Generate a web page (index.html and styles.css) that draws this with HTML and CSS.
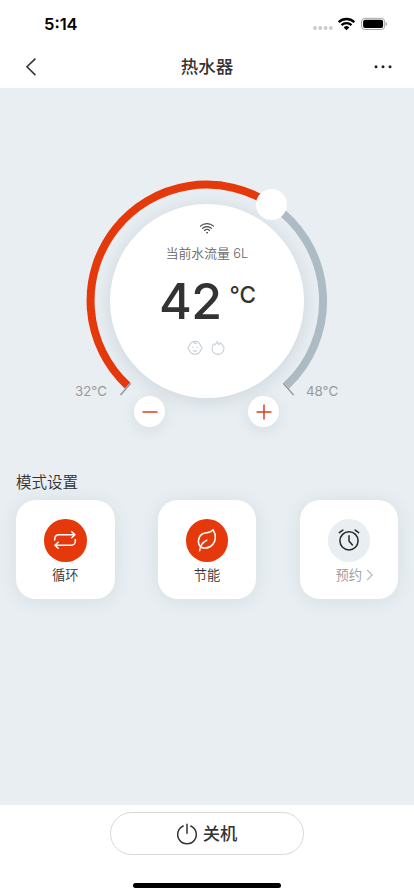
FILE: index.html
```html
<!DOCTYPE html>
<html lang="zh-CN">
<head>
<meta charset="utf-8">
<meta name="viewport" content="width=device-width, initial-scale=1">
<title>热水器</title>
<link rel="stylesheet" href="styles.css">
</head>
<body>
<div class="app">
  <header class="header">
    <div class="status">
      <span class="time">5:14</span>
      <svg class="status-icons" width="80" height="20" viewBox="0 0 80 20">
        <g fill="#cbcbcb"><circle cx="8" cy="14" r="1.9"/><circle cx="13.3" cy="14" r="1.9"/><circle cx="18.6" cy="14" r="1.9"/><circle cx="23.8" cy="14" r="1.9"/></g>
        <g fill="none" stroke="#000" stroke-width="2.3"><path d="M31.7 8.1a11.3 11.3 0 0 1 15.6 0"/><path d="M34.5 11.1a7.2 7.2 0 0 1 10 0"/></g>
        <path d="M36.7 13.4a4 4 0 0 1 5.6 0L39.500 16.2z"/>
        <rect x="54.500" y="4.3" width="23.2" height="11.2" rx="3.4" fill="none" stroke="#a5a5a5"/>
        <rect x="56.1" y="5.8" width="20" height="8.2" rx="2"/>
        <path d="M78.8 8v4c1.5-.7 1.5-3.300 0-4z" fill="#999"/>
      </svg>
    </div>
    <nav class="nav">
      <svg width="24" height="24" viewBox="0 0 24 24" fill="none" stroke="#333" stroke-width="1.6"><path d="M16.400 3.600 8 11.800l8.400 8.300"/></svg>
      <h1 class="title">热水器</h1>
      <svg width="24" height="24" viewBox="0 0 24 24" fill="#222"><circle cx="5" cy="11.800" r="1.500"/><circle cx="12" cy="11.800" r="1.500"/><circle cx="19" cy="11.800" r="1.500"/></svg>
    </nav>
  </header>

  <main class="main">
    <section class="dial">
      <svg class="ring" width="240" height="240" viewBox="0 0 240 240" fill="none">
        <path d="M40.500 204.500A116 116 0 0 1 184.500 23.500" stroke="#e5390c" stroke-width="8"/>
        <path d="M184.500 23.500A116 116 0 0 1 199.500 204.500" stroke="#adbbc4" stroke-width="8"/>
        <path d="M43.700 202.300 33.500 214M196.300 202.300l10.400 11.800" stroke="#8c9296" stroke-width="1.300"/>
      </svg>
      <div class="disc">
        <svg class="wifi" width="16" height="12" viewBox="0 0 16 12" fill="none" stroke="#444" stroke-width="1.100" stroke-linecap="round"><path d="M1.500 4.200a9.500 9.500 0 0 1 13 0M3.500 6.400a6.500 6.500 0 0 1 9 0M5.500 8.500a3.600 3.600 0 0 1 5 0"/><circle cx="8" cy="10.700" r=".5" fill="#444" stroke-width=".7"/></svg>
        <div class="flow">当前水流量 6L</div>
        <div class="temp"><span class="num">42</span><span class="unit">°C</span></div>
        <div class="tags">
          <svg width="16" height="16" viewBox="0 0 16 16" fill="none" stroke="#c5d0d6" stroke-width="1.100" stroke-linecap="round"><path d="M2.200 6.200C3.200 2.900 5.200 1.400 8 1.400s4.800 1.500 5.800 4.800c1.600.8 1.600 3 0 3.800-1 2.600-3 4.200-5.800 4.200S3.200 12.600 2.200 10C.6 9.200.6 7 2.200 6.200zM8 1.500c-1.200 1.200-.5 2.500 1.200 2"/><path d="M5.700 7v.5M10.300 7v.5M6.400 10.700c1 .6 2.200.6 3.200 0"/></svg>
          <svg width="16" height="16" viewBox="0 0 16 16" fill="none" stroke="#c5d0d6" stroke-width="1.100" stroke-linejoin="round"><path d="M7.400 1.200c.4 2 .2 2.500 1.600 3.300.5-.4.8-.8 1-1.500 2.400 1.300 4 3 4 5.400a6 6 0 0 1-12 0c0-2 .9-3.700 2.400-4.600l.6.8C6.500 3.800 7.300 3 7.400 1.200z"/></svg>
        </div>
      </div>
      <span class="knob"></span>
    </section>

    <section class="controls">
      <span class="limit">32°C</span>
      <button class="round" aria-label="降低"><svg width="16" height="16" viewBox="0 0 16 16"><path d="M.500 8h15" stroke="#dc3c1c" stroke-width="1.500"/></svg></button>
      <button class="round" aria-label="升高"><svg width="16" height="16" viewBox="0 0 16 16"><path d="M.500 8h15M8 .500v15" stroke="#dc3c1c" stroke-width="1.500"/></svg></button>
      <span class="limit high">48°C</span>
    </section>

    <h2 class="heading">模式设置</h2>
    <section class="cards">
      <div class="card">
        <span class="icon"><svg width="24" height="20" viewBox="0 0 24 20" fill="none" stroke="#fff" stroke-width="1.500" stroke-linecap="round" stroke-linejoin="round"><path d="M1.700 10V8.700a4 4 0 0 1 4-4h16.200M18.700 1.700l3.300 3-3.300 3M22.300 9.400v1.800a4 4 0 0 1-4 4H2M5.200 12.300l-3.300 3 3.300 3"/></svg></span>
        <span class="name">循环</span>
      </div>
      <div class="card">
        <span class="icon"><svg width="24" height="24" viewBox="0 0 24 24" fill="none" stroke="#fff" stroke-width="1.500" stroke-linecap="round" stroke-linejoin="round"><path d="M5.800 19.200C2.400 16 2.500 9.300 7 6.200c3.700-2.500 8.400-.2 11.100-4.600 3.200 5.300 3 11.600-.7 15.300-3 3.100-7.500 3.800-11.600 2.300zM4.700 22.800c.2-4.700 3-8.400 7.100-10.600"/></svg></span>
        <span class="name">节能</span>
      </div>
      <div class="card">
        <span class="icon pale"><svg width="24" height="24" viewBox="0 0 24 24" fill="none" stroke="#292929" stroke-width="1.500" stroke-linecap="round" stroke-linejoin="round"><circle cx="12" cy="12.800" r="9.100"/><path d="M12 7.700V13l3.400 4M2.300 4.600 5.900 2.100M18.100 2.100l3.600 2.500"/></svg></span>
        <span class="name muted">预约<svg width="8" height="12" viewBox="0 0 8 12" fill="none" stroke="#adbbc4" stroke-width="1.100"><path d="m1.200 1 5 5-5 5"/></svg></span>
      </div>
    </section>
  </main>

  <footer class="footer">
    <button class="power"><svg width="22" height="22" viewBox="0 0 22 22" fill="none" stroke="#333" stroke-width="1.500" stroke-linecap="round"><path d="M7.200 3a9.300 9.300 0 1 0 7.600 0M11 1.200v9"/></svg><span>关机</span></button>
    <div class="home"></div>
  </footer>
</div>
</body>
</html>
```
FILE: styles.css
```css
* { box-sizing: border-box; }
body {
  margin: 0;
  background: #fff;
  color: #333;
  font-family: Inter, "Noto Sans CJK SC", sans-serif;
}
button { font: inherit; color: inherit; padding: 0; }
svg { display: block; flex: none; overflow: visible; }
.app { width: 414px; height: 896px; display: flex; flex-direction: column; overflow: hidden; }
.header { height: 88px; background: #fff; }
.status { height: 44px; padding: 4px 27px 0 44px; display: flex; align-items: center; justify-content: space-between; }
.time { color: #000; font-size: 16.500px; font-weight: 600; line-height: 20px; padding-bottom: 1px; }
.nav { height: 44px; padding: 2px 19px 0; display: flex; align-items: center; justify-content: space-between; }
.title { margin: 0; font-size: 17.500px; font-weight: 500; line-height: 24px; }
.main { flex: 1; background: #e8eef2; padding: 93px 16px 0; }

.dial { display: grid; width: 240px; height: 240px; margin: 0 auto; place-items: center; }
.ring, .disc, .knob { grid-area: 1 / 1; }
.disc {
  width: 194px; height: 194px; border-radius: 50%; background: #fff;
  box-shadow: 0 3px 18px rgba(70, 95, 110, .17);
  display: flex; flex-direction: column; align-items: center; padding-top: 18px;
}
.flow { margin-top: 11px; font-size: 12.800px; line-height: 18px; font-weight: 350; color: #666; white-space: nowrap; }
.temp { margin-top: 7px; display: flex; height: 58px; padding-left: 1px; }
.num { font-size: 50px; font-weight: 500; line-height: 63px; letter-spacing: -.5px; }
.unit { margin-left: 8px; font-size: 22.500px; line-height: 49px; font-weight: 450; letter-spacing: 0; font-feature-settings: "calt" 0; }
.tags { margin-top: 12px; display: flex; gap: 7px; padding-right: 1px; }
.knob {
  width: 31px; height: 31px; border-radius: 50%; background: #fff;
  place-self: start; margin: 8px 0 0 169px;
}

.controls {
  display: grid; grid-template-columns: 59px 31px 83px 31px 70px;
  height: 60px; margin: -40px 43px 0 59px;
}
.controls .round + .round { grid-column: 4; }
.limit { font-size: 13.300px; line-height: 20px; color: #999; white-space: nowrap; }
.high { padding-left: 27px; }
.round {
  width: 31px; height: 31px; margin-top: 15px; border: 0; border-radius: 50%; background: #fff;
  display: grid; place-items: center; box-shadow: 0 4px 14px rgba(70, 95, 110, .1);
}
.heading { margin: 31px 0 6px; font-size: 15.500px; line-height: 22px; font-weight: 350; }
.cards { display: flex; justify-content: space-between; }
.card {
  width: 98.500px; height: 98.500px; border-radius: 20px; background: #fff;
  box-shadow: 0 2px 18px rgba(70, 95, 110, .1);
  display: flex; flex-direction: column; align-items: center; padding-top: 19px;
}
.icon { width: 42.500px; height: 42.500px; border-radius: 50%; background: #e5390c; display: grid; place-items: center; }
.pale { background: #e8eef2; }
.name { margin-top: 3px; font-size: 13.300px; line-height: 20px; font-weight: 350; }
.muted { color: #999; display: flex; align-items: center; gap: 4px; padding-left: 12px; }
.footer { height: 91px; background: #fff; display: flex; flex-direction: column; align-items: center; padding-top: 7px; }
.power {
  width: 194px; height: 43px; border: 1px solid #d8d8d8; border-radius: 22px; background: #fff;
  display: flex; align-items: center; justify-content: center; gap: 5px; padding-right: 1px;
  font-size: 17.300px; font-weight: 500; line-height: 24px;
}
.home { margin-top: 28px; width: 148px; height: 5px; border-radius: 3px; background: #000; }
```
